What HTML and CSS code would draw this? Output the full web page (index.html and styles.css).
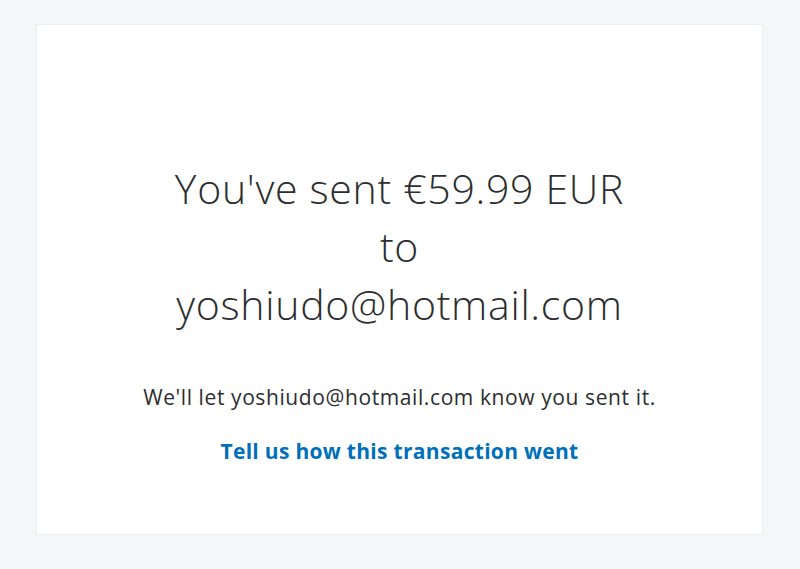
FILE: index.html
```html
<!DOCTYPE html>
<html lang="en">
<head>
    <meta charset="UTF-8">
    <meta name="viewport" content="width=device-width, initial-scale=1.0">
    <title>Payment sent</title>
    <link rel="stylesheet" href="styles.css">
</head>
<body>
    <div class="card">
        <h1 class="sent-title">You've sent €59.99 EUR<br>to<br>yoshiudo@hotmail.com</h1>
        <p class="notice">We'll let yoshiudo@hotmail.com know you sent it.</p>
        <a class="feedback-link" href="#">Tell us how this transaction went</a>
    </div>
</body>
</html>
```

FILE: styles.css
```css
/* Global */
* {
    margin: 0;
    padding: 0;
    box-sizing: border-box;
}

body {
    font-family: "Open Sans", "Liberation Sans", sans-serif;
    background-color: #f5f6fa;
    color: #2c2e2f;
    padding: 24px 37px 34px 36px;
    height: 100vh;
}

/* Card */
.card {
    background-color: #fff;
    border: 1px solid #eceef2;
    height: 100%;
    display: flex;
    flex-direction: column;
    align-items: center;
    padding-top: 134px;
    text-align: center;
}

.sent-title {
    font-weight: 300;
    font-size: 41px;
    line-height: 58px;
    letter-spacing: 0.7px;
    color: #2c2e2f;
}

.notice {
    margin-top: 50px;
    font-size: 21px;
    letter-spacing: 0.6px;
    color: #2c2e2f;
}

.feedback-link {
    margin-top: 26px;
    font-size: 21px;
    font-weight: bold;
    letter-spacing: 0.3px;
    color: #0070ba;
    text-decoration: none;
}
```
